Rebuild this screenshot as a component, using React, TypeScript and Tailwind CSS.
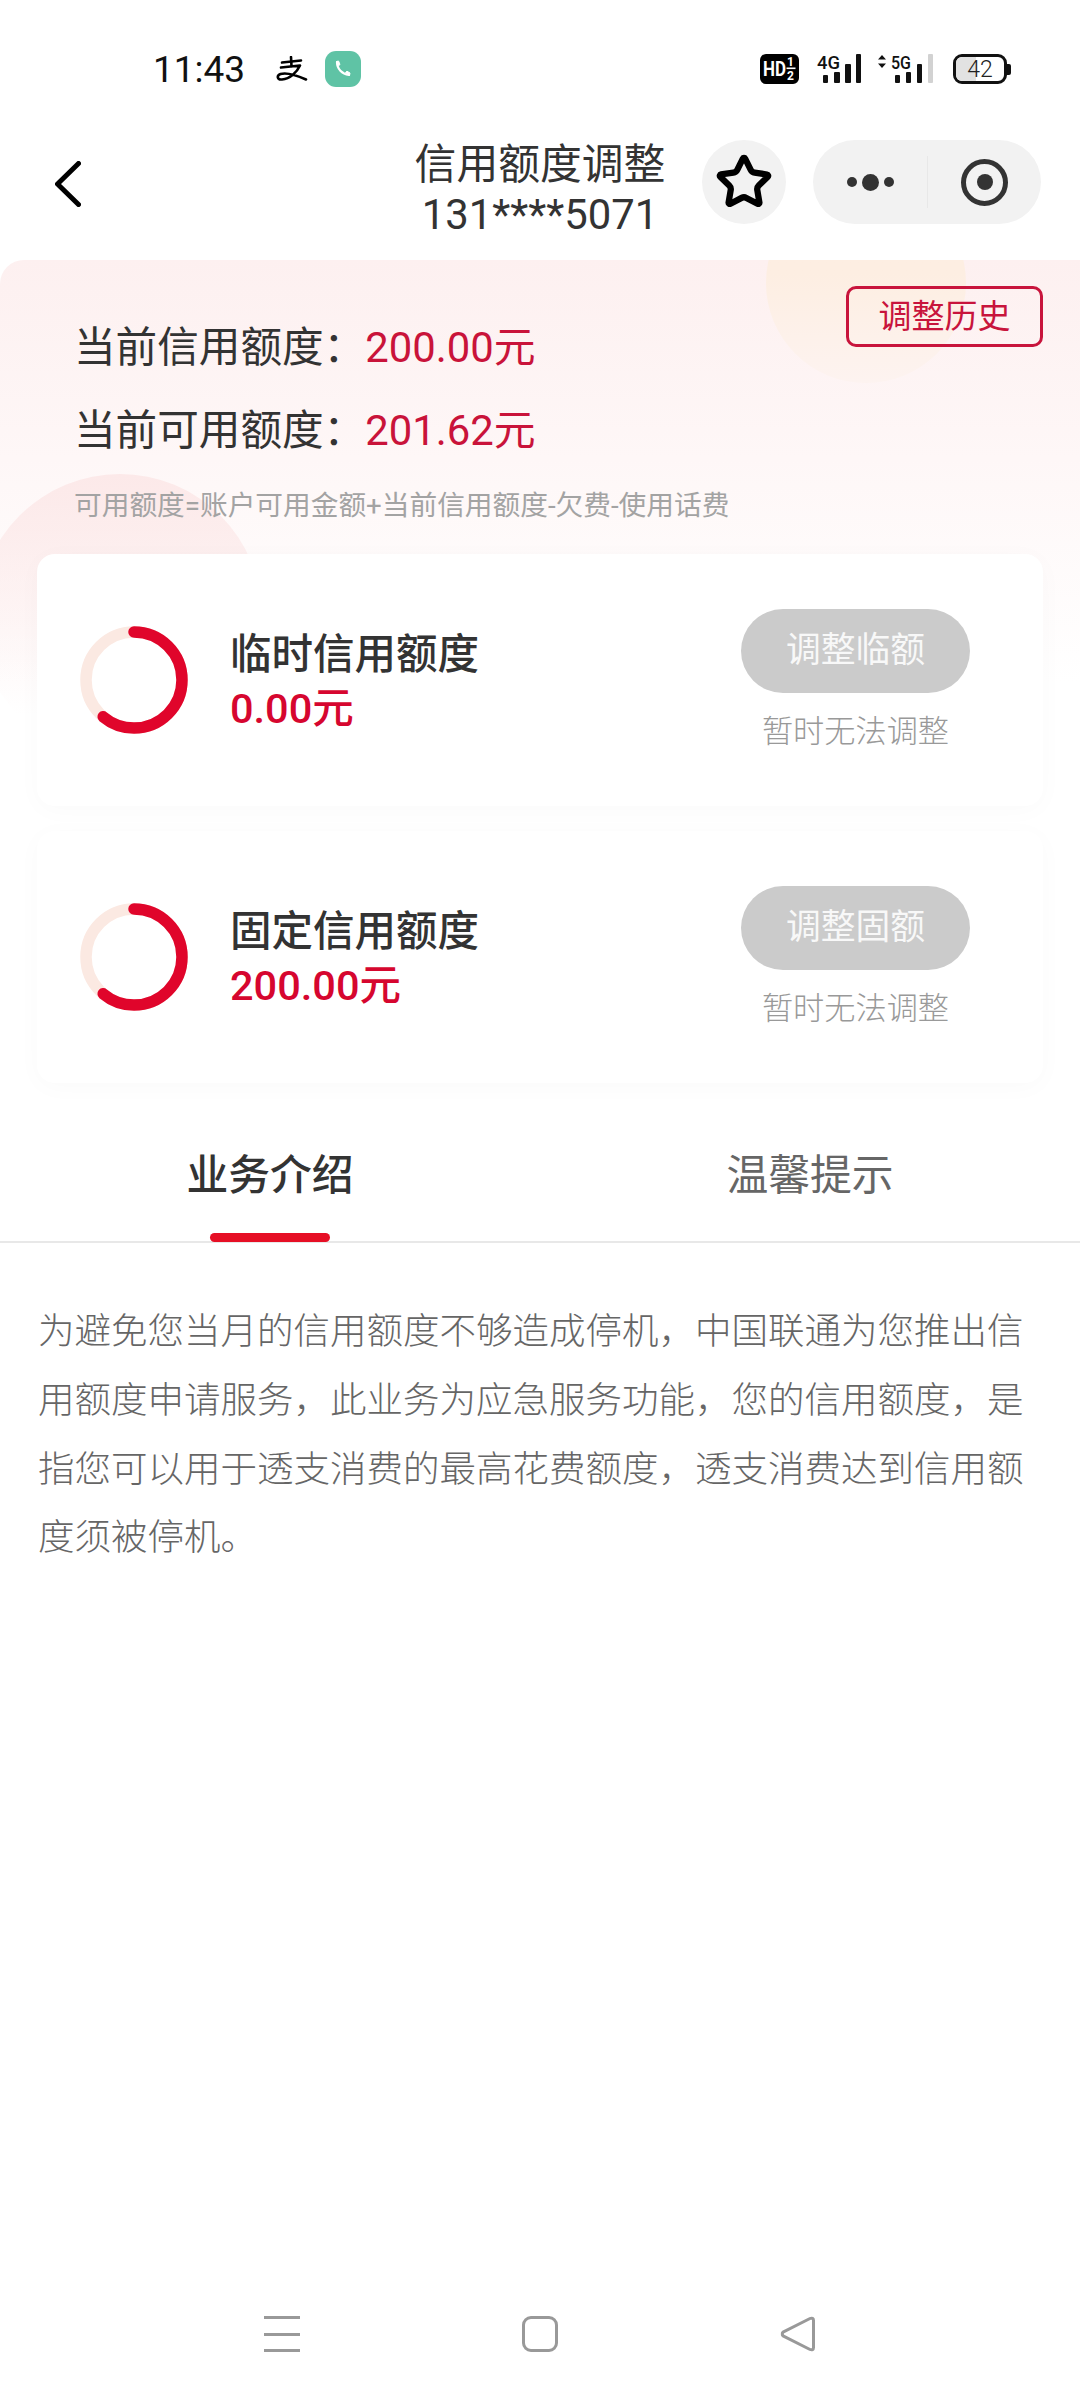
import { Star } from "lucide-react";

const fontStack = "font-['Roboto','Noto_Sans_CJK_SC',sans-serif]";

function Alipay() {
  return (
    <svg width="32" height="26" viewBox="0 0 32 26" fill="none" stroke="black" strokeLinecap="round">
      <path d="M6 6.5 L25 4.5" strokeWidth="2.6" />
      <path d="M15 1 L15.5 10" strokeWidth="2.6" />
      <path d="M5 11.5 L24 9.5 C21 16 14 23 6 23.5 C1 24 0.5 19.5 4.5 18 C11 16 20 19 30 23.5" strokeWidth="2.6" strokeLinejoin="round" />
    </svg>
  );
}

function CallBadge() {
  return (
    <div className="flex h-[36px] w-[36px] items-center justify-center rounded-[11px] bg-[#5fc3a5]">
      <svg width="20" height="20" viewBox="0 0 20 20" fill="none">
        <path d="M4 3 C4 10 9 15 16 16" stroke="white" strokeWidth="2.2" strokeLinecap="round" />
        <path d="M3.5 2.5 L5.5 2 L7 5.5 L5.5 6.8 Z" fill="white" stroke="white" strokeLinejoin="round" />
        <path d="M12.5 13.5 L14 12.2 L17 14 L16.5 16.5 Z" fill="white" stroke="white" strokeLinejoin="round" />
      </svg>
    </div>
  );
}

function HdIcon() {
  return (
    <svg width="39" height="30" viewBox="0 0 39 30">
      <rect width="39" height="30" rx="6" fill="#000" />
      <text x="3" y="22" fontSize="21" fontWeight="700" fill="white" fontFamily="Roboto" textLength="23" lengthAdjust="spacingAndGlyphs">HD</text>
      <text x="27" y="12" fontSize="12" fontWeight="700" fill="white" fontFamily="Roboto">1</text>
      <rect x="26.5" y="13.5" width="9" height="1.6" fill="white" />
      <text x="27" y="26" fontSize="12" fontWeight="700" fill="white" fontFamily="Roboto">2</text>
    </svg>
  );
}

function Signal4G() {
  return (
    <svg width="44" height="30" viewBox="0 0 44 30" fill="#111" className="overflow-visible">
      <text x="0" y="14.5" fontSize="19" fontWeight="500" fontFamily="Roboto" textLength="23" lengthAdjust="spacingAndGlyphs">4G</text>
      <rect x="6" y="21" width="5" height="8" rx="1" />
      <rect x="17" y="18" width="6" height="11" rx="1" />
      <rect x="28" y="10" width="6" height="19" rx="1" />
      <rect x="39" y="0" width="5" height="29" rx="1" />
    </svg>
  );
}

function Signal5G() {
  return (
    <svg width="56" height="30" viewBox="0 0 56 30" fill="#111" className="overflow-visible">
      <path d="M5 1 L9 5.5 H1 Z M5 14 L9 9.5 H1 Z" />
      <text x="14" y="14.5" fontSize="19" fontWeight="500" fontFamily="Roboto" textLength="20" lengthAdjust="spacingAndGlyphs">5G</text>
      <rect x="18" y="21" width="5" height="8" rx="1" />
      <rect x="29" y="18" width="5" height="11" rx="1" />
      <rect x="40" y="10" width="5" height="19" rx="1" />
      <rect x="51" y="0" width="5" height="29" rx="1" fill="#d2d2d2" />
    </svg>
  );
}

function Battery() {
  return (
    <div className="flex items-center">
      <div className="relative flex h-[30px] w-[54px] items-center justify-center overflow-hidden rounded-[9px] border-[3px] border-[#111] bg-white">
        <div className="absolute inset-y-0 left-0 w-[20px] bg-[#e2e2e2]" />
        <span className="relative text-[23px] leading-none font-light text-[#222]">42</span>
      </div>
      <div className="h-[11px] w-[4px] rounded-r-[2px] bg-[#111]" />
    </div>
  );
}

function Gauge() {
  // 220 degree arc, starts at the top and runs clockwise
  const r = 48;
  const c = 2 * Math.PI * r;
  return (
    <svg width="108" height="108" viewBox="0 0 108 108" fill="none" className="-rotate-90">
      <circle cx="54" cy="54" r={r} stroke="#fbe9e2" strokeWidth="11.5" />
      <circle
        cx="54"
        cy="54"
        r={r}
        stroke="#e0052b"
        strokeWidth="11.5"
        strokeLinecap="round"
        strokeDasharray={`${c * 0.61} ${c}`}
      />
    </svg>
  );
}

function LimitCard({ title, amount, action }: { title: string; amount: string; action: string }) {
  return (
    <div className="flex h-[252px] items-center rounded-[18px] bg-white pr-[73px] pl-[43px] shadow-[0_4px_26px_rgba(0,0,0,0.025)]">
      <Gauge />
      <div className="ml-[42px] flex-1 pt-[3px]">
        <div className="text-[41.5px] leading-[53.5px] font-medium text-[#333]">{title}</div>
        <div className="text-[41.5px] leading-[53.5px] font-medium text-[#d6062f]">{amount}</div>
      </div>
      <div className="flex w-[229px] flex-col items-center">
        <div className="flex h-[84px] w-full items-center justify-center rounded-full bg-[#cbcbcb] text-[34.8px] text-[#f8f8f8]">
          {action}
        </div>
        <div className="mt-[19px] text-[31.2px] leading-[40px] font-light text-[#999]">暂时无法调整</div>
      </div>
    </div>
  );
}

export default function App() {
  return (
    <div className={`flex h-[2400px] w-[1080px] flex-col overflow-hidden bg-white ${fontStack}`}>
      {/* status bar */}
      <div className="flex h-[130px] items-start pt-[51px] pr-[69px] pl-[153px]">
        <div className="flex h-[36px] items-center">
          <span className="text-[37px] leading-none text-[#111]">11:43</span>
          <div className="ml-[31px]">
            <Alipay />
          </div>
          <div className="ml-[17px]">
            <CallBadge />
          </div>
        </div>
        <div className="mt-[3px] ml-auto flex items-center">
          <HdIcon />
          <div className="ml-[18px]">
            <Signal4G />
          </div>
          <div className="ml-[16px]">
            <Signal5G />
          </div>
          <div className="ml-[20px]">
            <Battery />
          </div>
        </div>
      </div>

      {/* nav bar */}
      <div className="flex h-[130px] items-start pt-[10px]">
        <div className="w-[400px] pt-[21px] pl-[55px]">
          <svg width="26" height="46" viewBox="0 0 26 46" fill="none" stroke="black" strokeWidth="5" strokeLinecap="round" strokeLinejoin="round" className="block">
            <path d="M23.5 2.5 L2.5 23 L23.5 43.5" />
          </svg>
        </div>
        <div className="w-[280px] text-center text-[41.8px] leading-[50px] whitespace-nowrap text-[#333]">
          <div>信用额度调整</div>
          <div>131****5071</div>
        </div>
        <div className="ml-[22px] flex h-[84px] w-[84px] items-center justify-center rounded-full bg-[#f2f2f2]">
          <Star size={58} strokeWidth={2.6} color="#000" />
        </div>
        <div className="ml-[27px] flex h-[84px] w-[228px] items-center rounded-full bg-[#f2f2f2]">
          <div className="flex w-[114px] items-center justify-center gap-[5px]">
            <span className="h-[10px] w-[10px] rounded-full bg-[#333]" />
            <span className="h-[17px] w-[17px] rounded-full bg-[#333]" />
            <span className="h-[10px] w-[10px] rounded-full bg-[#333]" />
          </div>
          <div className="h-[52px] w-[1px] bg-[#e8e8e8]" />
          <div className="flex flex-1 items-center justify-center">
            <div className="flex h-[47px] w-[47px] items-center justify-center rounded-full border-[5px] border-[#333]">
              <span className="h-[16px] w-[16px] rounded-full bg-[#333]" />
            </div>
          </div>
        </div>
      </div>

      {/* credit summary */}
      <div className="relative h-[847px] overflow-hidden rounded-tl-[24px] bg-linear-to-b from-[#fdf0f0] to-white to-[50%]">
        <div className="absolute top-[-77px] left-[766px] h-[200px] w-[200px] rounded-full bg-linear-to-b from-[#fdeee2] from-[45%] to-[#fdf3f0]" />
        <div className="absolute top-[214px] left-[-22px] h-[284px] w-[284px] rounded-full bg-linear-to-b from-[#fce9e9] to-white/0 to-[85%]" />

        <div className="absolute top-[26px] right-[37px] flex h-[61px] w-[197px] items-center justify-center rounded-[10px] border-[3px] border-[#c8143c] text-[33px] text-[#c8143c]">
          调整历史
        </div>

        <div className="relative px-[37px] pt-[60px]">
          <div className="pl-[37px]">
            <div className="text-[41.6px] leading-[56px] text-[#333]">
              当前信用额度：<span className="text-[41.8px] text-[#c9133a]">200.00元</span>
            </div>
            <div className="mt-[27px] text-[41.6px] leading-[56px] text-[#333]">
              当前可用额度：<span className="text-[41.8px] text-[#c9133a]">201.62元</span>
            </div>
            <div className="mt-[27px] text-[27.7px] leading-[40px] text-[#a3a3a3]">
              可用额度=账户可用金额+当前信用额度-欠费-使用话费
            </div>
          </div>
          <div className="mt-[28px] flex flex-col gap-[25px]">
            <LimitCard title="临时信用额度" amount="0.00元" action="调整临额" />
            <LimitCard title="固定信用额度" amount="200.00元" action="调整固额" />
          </div>
        </div>
      </div>

      {/* tabs */}
      <div className="grid h-[136px] grid-cols-2 border-b-2 border-[#e8e8e8]">
        <div className="relative flex items-center justify-center pt-[4px] text-[41.8px] font-medium text-[#333]">
          业务介绍
          <div className="absolute bottom-[-1px] h-[9px] w-[120px] rounded-full bg-[#e60f25]" />
        </div>
        <div className="flex items-center justify-center pt-[4px] text-[41.8px] text-[#666]">温馨提示</div>
      </div>

      {/* description */}
      <p className="w-[1030px] pt-[55px] pl-[38px] text-[36.5px] leading-[68.8px] font-light text-[#666]">
        为避免您当月的信用额度不够造成停机，中国联通为您推出信用额度申请服务，此业务为应急服务功能，您的信用额度，是指您可以用于透支消费的最高花费额度，透支消费达到信用额度须被停机。
      </p>

      {/* android nav */}
      <div className="mt-auto flex h-[132px] items-center justify-center">
        <div className="flex w-[258px] justify-center">
          <div className="flex h-[36px] w-[36px] flex-col justify-between">
            <span className="h-[3px] bg-[#999]" />
            <span className="h-[3px] bg-[#999]" />
            <span className="h-[3px] bg-[#999]" />
          </div>
        </div>
        <div className="flex w-[258px] justify-center">
          <div className="h-[36px] w-[36px] rounded-[9px] border-[3px] border-[#999]" />
        </div>
        <div className="flex w-[258px] justify-center">
          <svg width="36" height="36" viewBox="0 0 36 36" fill="none" stroke="#999" strokeWidth="3" strokeLinejoin="round">
            <path d="M2.5 18 C2 17 2.5 16.5 3.5 15.8 L30 2.5 C32 1.6 33.5 2.5 33.5 4.5 V31.5 C33.5 33.5 32 34.4 30 33.5 L3.5 20.2 C2.5 19.5 2 19 2.5 18 Z" />
          </svg>
        </div>
      </div>
    </div>
  );
}
